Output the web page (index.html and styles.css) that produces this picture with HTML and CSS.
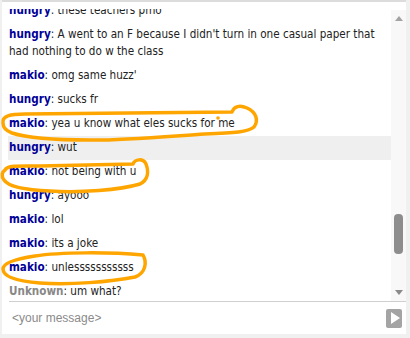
FILE: index.html
```html
<!DOCTYPE html>
<html lang="en">
<head>
    <meta charset="UTF-8">
    <title>Chat</title>
    <link rel="stylesheet" href="styles.css">
</head>
<body>
    <div class="chat">
        <!-- message log + scrollbar -->
        <div class="log">
            <div class="messages">
                <div class="msg first"><span class="name">hungry</span>: these teachers pmo</div>
                <div class="msg"><span class="name">hungry</span>: A went to an F because I didn't turn in one casual paper that had nothing to do w the class</div>
                <div class="msg"><span class="name">makio</span>: omg same huzz'</div>
                <div class="msg"><span class="name">hungry</span>: sucks fr</div>
                <div class="msg"><span class="name">makio</span>: yea u know what eles sucks for me</div>
                <div class="msg hover"><span class="name">hungry</span>: wut</div>
                <div class="msg"><span class="name">makio</span>: not being with u</div>
                <div class="msg"><span class="name">hungry</span>: ayooo</div>
                <div class="msg"><span class="name">makio</span>: lol</div>
                <div class="msg"><span class="name">makio</span>: its a joke</div>
                <div class="msg"><span class="name">makio</span>: unlesssssssssss</div>
                <div class="msg"><span class="name unknown">Unknown</span>: um what?</div>
            </div>
            <div class="scrollbar">
                <div class="arrow up"></div>
                <div class="track">
                    <div class="thumb"></div>
                </div>
                <div class="arrow down"></div>
            </div>
        </div>

        <!-- input -->
        <div class="composer">
            <div class="input">&lt;your message&gt;</div>
            <button class="send"><span class="tri"></span></button>
        </div>

        <!-- hand drawn circles on top -->
        <svg class="marks" width="410" height="338" viewBox="0 0 410 338">
            <g fill="none" stroke="#ffa500" stroke-width="3.5" stroke-linecap="round" stroke-linejoin="round">
                <path d="M 3,123 C 2,116 10,114 25,114 L 232,112 C 234,106 240,105 247,108 C 256,112 259,120 254,127 C 248,132 235,133 205,134 C 160,137 110,141 90,140 C 60,140 30,139 12,133 C 4,130 3,126 3,123"/>
                <path d="M 5,170 C 8,165 20,166 40,166 L 133,164 C 135,159 143,158 146,164 C 149,172 148,180 140,184 C 120,190 80,193 50,191 C 25,190 8,186 4,180 C 1,176 2,172 5,170"/>
                <path d="M 143,255 C 110,252 60,252 35,256 C 15,259 3,263 3,269 C 3,276 15,281 40,283 C 70,285 110,282 135,277 C 146,273 147,262 143,255"/>
            </g>
            <circle cx="218" cy="118" r="1.8" fill="#ffa500"/>
        </svg>
    </div>
</body>
</html>
```

FILE: styles.css
```css
* {
    margin: 0;
    padding: 0;
    box-sizing: border-box;
}

body {
    background: #f0f0f0;
    font-family: 'DejaVu Sans Condensed', 'DejaVu Sans', sans-serif;
    font-size: 11.6px;
    color: #222;
    height: 338px;
    overflow: hidden;
}

.chat {
    position: relative;
    width: 404px;
    height: 334px;
    margin-left: 2px;
    border-top: 2px solid #dcdcdc;
    background: #fff;
    display: flex;
    flex-direction: column;
}

/* log */
.log {
    height: 292px;
    margin-top: 7px;
    display: flex;
    overflow: hidden;
}

.messages {
    flex: 1;
    padding-left: 6px;
    overflow: hidden;
}

.msg {
    padding: 3px 0 4px 1px;
    line-height: 17px;
}

.msg.first {
    margin-top: -10.5px;
}

.msg.hover {
    background: #efefef;
}

.name {
    font-weight: bold;
    color: #000099;
}

.name.unknown {
    color: #888;
}

/* fake scrollbar */
.scrollbar {
    width: 15px;
    margin-top: 1px;
    background: #f8f8f8;
    display: flex;
    flex-direction: column;
    align-items: center;
}

.arrow {
    width: 0;
    height: 0;
    border-left: 4px solid transparent;
    border-right: 4px solid transparent;
}

.arrow.up {
    margin-top: 6px;
    border-bottom: 5px solid #a3a3a3;
}

.arrow.down {
    margin-bottom: 6px;
    border-top: 5px solid #8a8a8a;
}

.track {
    flex: 1;
    width: 100%;
    display: flex;
    justify-content: center;
    padding-top: 193px;
}

.thumb {
    width: 9px;
    height: 40px;
    border-radius: 4px;
    background: #8d8d8d;
}

/* composer */
.composer {
    flex: 1;
    margin-left: 7px;
    border-top: 1px solid #cfcfcf;
    display: flex;
    align-items: center;
    padding: 0 4px 0 3px;
}

.input {
    flex: 1;
    color: #8a8a8a;
    font-family: 'Liberation Sans', Arial, sans-serif;
    font-size: 12px;
}

.send {
    width: 16px;
    height: 19px;
    border: none;
    border-radius: 2px;
    background: #a4a4a4;
    display: flex;
    align-items: center;
    justify-content: center;
}

.tri {
    width: 0;
    height: 0;
    margin-left: 2px;
    border-top: 6px solid transparent;
    border-bottom: 6px solid transparent;
    border-left: 9px solid #fff;
}

/* annotation overlay */
.marks {
    position: absolute;
    left: -2px;
    top: -2px;
    pointer-events: none;
}
```
